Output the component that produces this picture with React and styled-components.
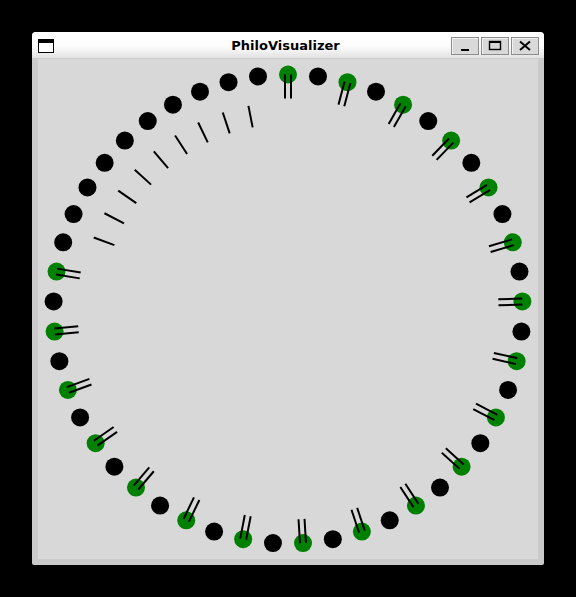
import React from 'react';
import styled, { createGlobalStyle } from 'styled-components';

const GlobalStyle = createGlobalStyle`
  html, body { margin: 0; padding: 0; background: #000; }
  body { padding: 32px; font-family: "DejaVu Sans", Verdana, sans-serif; }
`;

const Window = styled.div`
  width: 512px;
  background: #cacaca;
  border-radius: 4px 4px 2px 2px;
  overflow: hidden;
`;

const TitleBar = styled.div`
  height: 26px;
  display: grid;
  grid-template-columns: 1fr auto 1fr;
  align-items: center;
  padding: 0 5px 0 6px;
  background: linear-gradient(to bottom, #ffffff 0%, #fcfcfc 55%, #e2e2e2 100%);
`;

const AppIcon = styled.div`
  width: 16px;
  height: 14px;
  box-sizing: border-box;
  border: 1px solid #000;
  border-top-width: 4px;
  background: #fff;
  margin-top: 1px;
`;

const Title = styled.div`
  font-family: "DejaVu Sans", Verdana, sans-serif;
  font-weight: bold;
  font-size: 13px;
  color: #000;
  margin-right: 6px;
  margin-top: 0px;
`;

const Buttons = styled.div`
  display: flex;
  justify-content: flex-end;
  gap: 2px;
`;

const WinButton = styled.div`
  width: 28px;
  height: 18px;
  box-sizing: border-box;
  border: 1px solid #8c8c8c;
  background: #d9d9d9;
  box-shadow: inset 1px 1px 0 #f2f2f2;
  display: flex;
  align-items: center;
  justify-content: center;
  margin-top: 1px;
`;

const Body = styled.div`
  padding: 1px 6px 6px;
`;

const Canvas = styled.div`
  width: 500px;
  height: 500px;
  background: #d8d8d8;
`;

const N = 49;
const R = 234.5;
const C = 250;
const eating = new Set(Array.from({ length: 20 }, (_, k) => k * 2));

const ang = (i) => ((-90 + (i * 360) / N) * Math.PI) / 180;
const pt = (a, r) => [C + r * Math.cos(a), C + r * Math.sin(a)];

function Table() {
  const tableForks = [];
  for (let f = 0; f < N; f++) {
    const left = f;
    const right = (f + 1) % N;
    if (eating.has(left) || eating.has(right)) continue;
    const a = ang(f + 0.5);
    const [x1, y1] = pt(a, 207);
    const [x2, y2] = pt(a, 185);
    tableForks.push(<line key={'t' + f} x1={x1} y1={y1} x2={x2} y2={y2} />);
  }
  const held = [];
  const circles = [];
  for (let i = 0; i < N; i++) {
    const a = ang(i);
    const [cx, cy] = pt(a, R);
    circles.push(
      <circle key={'c' + i} cx={cx} cy={cy} r={9} fill={eating.has(i) ? '#008000' : '#000'} />
    );
    if (eating.has(i)) {
      const px = -Math.sin(a);
      const py = Math.cos(a);
      [-3, 3].forEach((o) => {
        const [sx, sy] = pt(a, R);
        const [ex, ey] = pt(a, R - 24);
        held.push(
          <line key={'h' + i + o} x1={sx + px * o} y1={sy + py * o} x2={ex + px * o} y2={ey + py * o} />
        );
      });
    }
  }
  return (
    <svg width="500" height="500" viewBox="0 0 500 500">
      <g stroke="#000" strokeWidth="2">{tableForks}</g>
      {circles}
      <g stroke="#000" strokeWidth="2">{held}</g>
    </svg>
  );
}

export default function App() {
  return (
    <>
      <GlobalStyle />
      <Window>
        <TitleBar>
          <div><AppIcon /></div>
          <Title>PhiloVisualizer</Title>
          <Buttons>
            <WinButton>
              <svg width="12" height="12" viewBox="0 0 12 12"><rect x="2" y="9" width="8" height="2" fill="#000" /></svg>
            </WinButton>
            <WinButton>
              <svg width="14" height="12" viewBox="0 0 14 12"><rect x="1.5" y="1.5" width="11" height="8" fill="none" stroke="#000" strokeWidth="1.4" /><rect x="1" y="1" width="12" height="2" fill="#000" /></svg>
            </WinButton>
            <WinButton>
              <svg width="12" height="12" viewBox="0 0 12 12"><path d="M1 1.5 L11 10 M11 1.5 L1 10" stroke="#000" strokeWidth="2" /></svg>
            </WinButton>
          </Buttons>
        </TitleBar>
        <Body>
          <Canvas><Table /></Canvas>
        </Body>
      </Window>
    </>
  );
}
